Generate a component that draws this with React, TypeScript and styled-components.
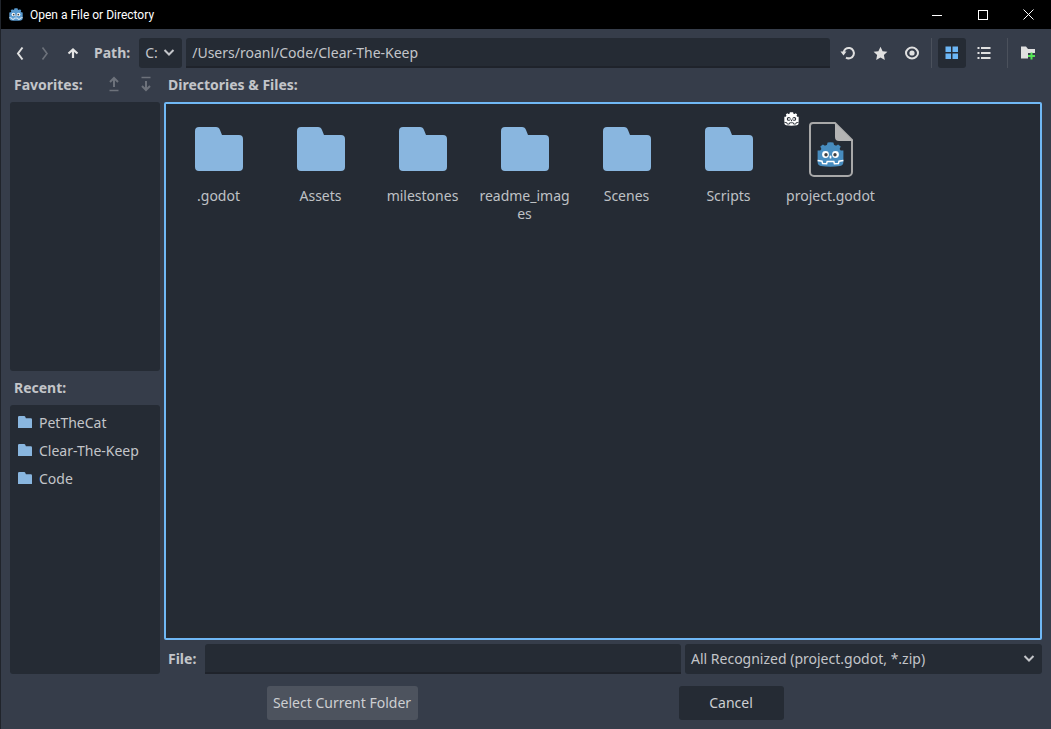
import * as React from 'react';
import styled, { createGlobalStyle } from 'styled-components';

const GlobalStyle = createGlobalStyle`
  html, body {
    margin: 0;
    padding: 0;
    background: #000;
  }
  * {
    box-sizing: border-box;
  }
`;

const Window = styled.div`
  width: 1051px;
  height: 729px;
  display: flex;
  flex-direction: column;
  overflow: hidden;
  background: #363d4a;
  color: #c3c5c9;
  font-family: 'Noto Sans', 'Open Sans', sans-serif;
  font-size: 14px;
  border-left: 1px solid #20242b;
`;

const TitleBar = styled.div`
  height: 29px;
  flex: none;
  margin-left: -1px;
  display: flex;
  align-items: center;
  background: #000;
  color: #fff;
  font-family: 'Roboto', 'Noto Sans', sans-serif;
  font-size: 12px;
  padding-left: 9px;
  gap: 7px;
`;

const TitleText = styled.span`
  flex: 1;
`;

const WinControls = styled.div`
  display: flex;
`;

const WinButton = styled.div`
  width: 46px;
  height: 29px;
  display: flex;
  align-items: center;
  justify-content: center;
  margin-left: -0.5px;
`;

const Body = styled.div`
  flex: 1;
  display: flex;
  flex-direction: column;
  padding: 9px;
`;

const Toolbar = styled.div`
  height: 30px;
  display: flex;
  align-items: center;
  gap: 4px;
`;

const IconButton = styled.div<{ $w?: number; $active?: boolean; $left?: number }>`
  width: ${({ $w }) => $w ?? 28}px;
  height: 30px;
  flex: none;
  margin-left: ${({ $left }) => $left ?? 0}px;
  display: flex;
  align-items: center;
  justify-content: center;
  border-radius: 3px;
  background: ${({ $active }) => ($active ? '#252b34' : 'transparent')};
`;

const Label = styled.span`
  font-weight: 700;
  white-space: nowrap;
  color: #c3c5c9;
`;

const PathLabel = styled(Label)`
  margin: 0 5px 0 7px;
  padding-bottom: 2px;
`;

const Field = styled.div<{ $w?: number }>`
  height: 30px;
  ${({ $w }) => ($w ? `width: ${$w}px; flex: none;` : 'flex: 1;')}
  display: flex;
  align-items: center;
  justify-content: space-between;
  padding: 0 6px 2px;
  background: #252b34;
  border-radius: 3px;
  color: #c3c5c9;
  white-space: nowrap;
`;

const Input = styled(Field)`
  border-bottom: 2px solid #1f232b;
  border-radius: 3px 3px 0 0;
  padding-bottom: 0;
`;

const Separator = styled.div<{ $left: number }>`
  width: 1px;
  height: 30px;
  flex: none;
  margin: 0 2px 0 ${({ $left }) => $left}px;
  background: #4b515c;
`;

const Columns = styled.div`
  flex: 1;
  display: grid;
  grid-template-columns: 150px 1fr;
  column-gap: 4px;
`;

const Sidebar = styled.div`
  display: flex;
  flex-direction: column;
`;

const SectionHead = styled.div`
  height: 34px;
  flex: none;
  display: flex;
  align-items: center;
  padding: 0 0 2px 4px;
`;

const SortButtons = styled.div`
  display: flex;
  margin-left: 24px;
  gap: 18px;
`;

const SidePanel = styled.div`
  flex: 1;
  padding: 4px 0 0;
  background: #252b34;
  border-radius: 3px;
`;

const RecentRow = styled.div`
  height: 28px;
  display: flex;
  align-items: center;
  gap: 7px;
  padding: 0 0 2px 8px;
`;

const Main = styled.div`
  display: flex;
  flex-direction: column;
`;

const FilePanel = styled.div`
  height: 538px;
  flex: none;
  padding: 13px 6px;
  display: grid;
  grid-template-columns: repeat(auto-fill, 94px);
  grid-auto-rows: max-content;
  column-gap: 8px;
  background: #252b34;
  border: 2px solid #70b8f5;
  border-radius: 2px;
`;

const Item = styled.div`
  position: relative;
  display: flex;
  flex-direction: column;
  align-items: center;
`;

const ItemIcon = styled.div`
  height: 64px;
  display: flex;
  align-items: center;
  justify-content: center;
`;

const ItemName = styled.div`
  width: 94px;
  margin-top: 6px;
  padding-right: 1px;
  text-align: center;
  line-height: 18px;
  word-break: break-all;
  color: #bfc1c5;
`;

const Badge = styled.div`
  position: absolute;
  left: 0;
  top: -5px;
  line-height: 0;
`;

const FileDoc = styled.div`
  position: relative;
  width: 44px;
  height: 55px;
  line-height: 0;
`;

const DocLogo = styled.div`
  position: absolute;
  left: 8px;
  top: 20px;
  line-height: 0;
`;

const FileRow = styled.div`
  height: 30px;
  flex: none;
  margin-top: 4px;
  display: flex;
  align-items: center;
  gap: 4px;
`;

const FileLabel = styled(Label)`
  width: 37px;
  padding: 0 0 2px 4px;
  flex: none;
`;

const Footer = styled.div`
  flex: none;
  display: flex;
  justify-content: center;
  gap: 261px;
  margin-top: 12px;
  padding-right: 2px;
`;

const Button = styled.div<{ $w: number; $primary?: boolean }>`
  width: ${({ $w }) => $w}px;
  height: 34px;
  display: flex;
  align-items: center;
  justify-content: center;
  padding-bottom: 2px;
  border-radius: 3px;
  background: ${({ $primary }) => ($primary ? '#4d535e' : '#252b34')};
  color: #cdcfd2;
  white-space: nowrap;
`;

function GodotHead({ size = 27, fill = '#478cbf', line = '#fff', pupil = '#414042' }: { size?: number; fill?: string; line?: string; pupil?: string }) {
  return (
    <svg width={size} height={(size * 25) / 27} viewBox="0 0 27 25">
      <path
        fill={fill}
        d="M10.6 0.5 L9.9 3 Q8.9 3.3 8 3.8 L5.9 2.4 L3.3 4.6 L4.4 6.9 Q3.8 7.6 3.3 8.4 L0.6 8.6 L0.6 20 Q0.6 23.6 4 24 Q13.5 25.4 23 24 Q26.4 23.6 26.4 20 L26.4 8.6 L23.7 8.4 Q23.2 7.6 22.6 6.9 L23.7 4.6 L21.1 2.4 L19 3.8 Q18.1 3.3 17.1 3 L16.4 0.5 Q13.5 0.1 10.6 0.5 Z"
      />
      <path
        fill="none"
        stroke={line}
        strokeWidth="1.5"
        d="M0.6 18.6 L5 19.2 L5.6 21.6 L9.6 21.8 L10.2 19.4 L16.8 19.4 L17.4 21.8 L21.4 21.6 L22 19.2 L26.4 18.6"
      />
      <circle cx="8.5" cy="12.5" r="3.4" fill={line} />
      <circle cx="18.5" cy="12.5" r="3.4" fill={line} />
      <circle cx="9" cy="12.7" r="1.7" fill={pupil} />
      <circle cx="18" cy="12.7" r="1.7" fill={pupil} />
      <rect x="12.6" y="13.6" width="1.8" height="3" rx="0.9" fill={line} />
    </svg>
  );
}

function FolderIcon({ size }: { size: number }) {
  return (
    <svg width={size} height={(size * 44) / 48} viewBox="0 0 48 44">
      <path
        fill="#89b6df"
        d="M4 0 H21 Q24 0 25 3 L27 8 H44 a4 4 0 0 1 4 4 V40 a4 4 0 0 1 -4 4 H4 a4 4 0 0 1 -4 -4 V4 a4 4 0 0 1 4 -4 Z"
      />
    </svg>
  );
}

function Chevron({ dir, color = '#fff', width = 2 }: { dir: 'left' | 'right' | 'down'; color?: string; width?: number }) {
  const points = { left: '8.5,1.5 4,7.5 8.5,13.5', right: '4.5,1.5 9,7.5 4.5,13.5', down: '2.5,5 7,9.5 11.5,5' }[dir];
  return (
    <svg width="14" height="15" viewBox="0 0 14 15">
      <polyline points={points} fill="none" stroke={color} strokeWidth={width} />
    </svg>
  );
}

function UpArrow() {
  return (
    <svg width="12" height="10" viewBox="0 0 12 10">
      <path d="M6 10 V1.5 M1.5 5.5 L6 1.5 L10.5 5.5" fill="none" stroke="#e4e4e4" strokeWidth="2.2" />
    </svg>
  );
}

function SortArrow({ up, color = '#6d727b' }: { up: boolean; color?: string }) {
  return (
    <svg width="14" height="16" viewBox="0 0 14 16">
      <g fill="none" stroke={color} strokeWidth="2">
        {up ? (
          <>
            <path d="M7 11 V2 M3 6 L7 2 L11 6" />
            <path d="M2.5 14.5 H11.5" strokeWidth="1.5" />
          </>
        ) : (
          <>
            <path d="M7 5 V14 M3 10 L7 14 L11 10" />
            <path d="M2.5 1.5 H11.5" strokeWidth="1.5" />
          </>
        )}
      </g>
    </svg>
  );
}

const entries = ['.godot', 'Assets', 'milestones', 'readme_images', 'Scenes', 'Scripts'];
const recent = ['PetTheCat', 'Clear-The-Keep', 'Code'];

export default function App() {
  return (
    <Window>
      <GlobalStyle />
      <TitleBar>
        <GodotHead size={14} fill="#5a9bd0" />
        <TitleText>Open a File or Directory</TitleText>
        <WinControls>
          <WinButton>
            <svg width="10" height="10" viewBox="0 0 10 10">
              <path d="M0 5.5 H10" stroke="#fff" strokeWidth="1" />
            </svg>
          </WinButton>
          <WinButton>
            <svg width="10" height="10" viewBox="0 0 10 10">
              <rect x="0.5" y="0.5" width="9" height="9" fill="none" stroke="#fff" />
            </svg>
          </WinButton>
          <WinButton>
            <svg width="11" height="11" viewBox="0 0 11 11">
              <path d="M0.5 0.5 L10.5 10.5 M10.5 0.5 L0.5 10.5" stroke="#fff" />
            </svg>
          </WinButton>
        </WinControls>
      </TitleBar>
      <Body>
        <Toolbar>
          <IconButton $w={20} $left={1}>
            <Chevron dir="left" color="#e0e0e0" />
          </IconButton>
          <IconButton $w={20}>
            <Chevron dir="right" color="#6d727b" width={1.6} />
          </IconButton>
          <IconButton $w={20} $left={4}>
            <UpArrow />
          </IconButton>
          <PathLabel>Path:</PathLabel>
          <Field $w={43}>
            C:
            <Chevron dir="down" color="#c3c5c9" />
          </Field>
          <Input>/Users/roanl/Code/Clear-The-Keep</Input>
          <IconButton>
            <svg width="16" height="16" viewBox="0 0 16 16">
              <path d="M3.5 8 A5.2 5.2 0 1 1 6 12.6" fill="none" stroke="#e0e0e0" strokeWidth="2" />
              <path d="M0.5 6.5 L6.5 6.5 L3.5 10.5 Z" fill="#e0e0e0" />
            </svg>
          </IconButton>
          <IconButton>
            <svg width="15" height="15" viewBox="0 0 15 15">
              <path
                fill="#e0e0e0"
                d="M7.5 0.8 L9.6 5.2 L14.4 5.8 L10.9 9.1 L11.8 13.9 L7.5 11.6 L3.2 13.9 L4.1 9.1 L0.6 5.8 L5.4 5.2 Z"
              />
            </svg>
          </IconButton>
          <IconButton>
            <svg width="16" height="14" viewBox="0 0 16 14">
              <ellipse cx="8" cy="7" rx="6" ry="5.4" fill="none" stroke="#e0e0e0" strokeWidth="2" />
              <circle cx="8" cy="7" r="2.6" fill="#e0e0e0" />
            </svg>
          </IconButton>
          <Separator $left={1} />
          <IconButton $active>
            <svg width="14" height="14" viewBox="0 0 14 14" fill="#6cb6f5">
              <rect x="0.5" y="0.5" width="5.5" height="5.5" />
              <rect x="7.5" y="0.5" width="5.5" height="5.5" />
              <rect x="0.5" y="7.5" width="5.5" height="5.5" />
              <rect x="7.5" y="7.5" width="5.5" height="5.5" />
            </svg>
          </IconButton>
          <IconButton>
            <svg width="14" height="14" viewBox="0 0 14 14" fill="#e0e0e0">
              <rect x="0.5" y="1" width="2" height="2" />
              <rect x="4" y="1" width="9.5" height="2" />
              <rect x="0.5" y="6" width="2" height="2" />
              <rect x="4" y="6" width="9.5" height="2" />
              <rect x="0.5" y="11" width="2" height="2" />
              <rect x="4" y="11" width="9.5" height="2" />
            </svg>
          </IconButton>
          <Separator $left={5} />
          <IconButton>
            <svg width="16" height="14" viewBox="0 0 16 14">
              <path fill="#e0e0e0" d="M1 0.5 H6 L8 3 H15 V12.5 H1 Z" />
              <path d="M8 7 H16 V14 H8 Z" fill="#363d4a" />
              <path d="M11.5 6.5 V13.5 M8 10 H15" stroke="#55e655" strokeWidth="2" />
            </svg>
          </IconButton>
        </Toolbar>
        <Columns>
          <Sidebar>
            <SectionHead>
              <Label>Favorites:</Label>
              <SortButtons>
                <SortArrow up />
                <SortArrow up={false} />
              </SortButtons>
            </SectionHead>
            <SidePanel />
            <SectionHead>
              <Label>Recent:</Label>
            </SectionHead>
            <SidePanel>
              {recent.map((name) => (
                <RecentRow key={name}>
                  <FolderIcon size={14} />
                  {name}
                </RecentRow>
              ))}
            </SidePanel>
          </Sidebar>
          <Main>
            <SectionHead>
              <Label>Directories &amp; Files:</Label>
            </SectionHead>
            <FilePanel>
              {entries.map((name) => (
                <Item key={name}>
                  <ItemIcon>
                    <FolderIcon size={48} />
                  </ItemIcon>
                  <ItemName>{name}</ItemName>
                </Item>
              ))}
              <Item>
                <Badge>
                  <GodotHead size={15} fill="#fff" line="#252b34" pupil="#fff" />
                </Badge>
                <ItemIcon>
                  <FileDoc>
                    <svg width="44" height="55" viewBox="0 0 44 55">
                      <path
                        d="M4 1 H26 L43 18 V50 a4 4 0 0 1 -4 4 H5 a4 4 0 0 1 -4 -4 V4 a3 3 0 0 1 3 -3 Z"
                        fill="none"
                        stroke="#a8a8a8"
                        strokeWidth="2"
                      />
                      <path d="M26 1 L44 19 H30 a4 4 0 0 1 -4 -4 Z" fill="#b4b4b4" />
                    </svg>
                    <DocLogo>
                      <GodotHead />
                    </DocLogo>
                  </FileDoc>
                </ItemIcon>
                <ItemName>project.godot</ItemName>
              </Item>
            </FilePanel>
            <FileRow>
              <FileLabel>File:</FileLabel>
              <Input />
              <Field $w={357}>
                All Recognized (project.godot, *.zip)
                <Chevron dir="down" color="#c3c5c9" />
              </Field>
            </FileRow>
          </Main>
        </Columns>
        <Footer>
          <Button $w={151} $primary>
            Select Current Folder
          </Button>
          <Button $w={105}>Cancel</Button>
        </Footer>
      </Body>
    </Window>
  );
}
